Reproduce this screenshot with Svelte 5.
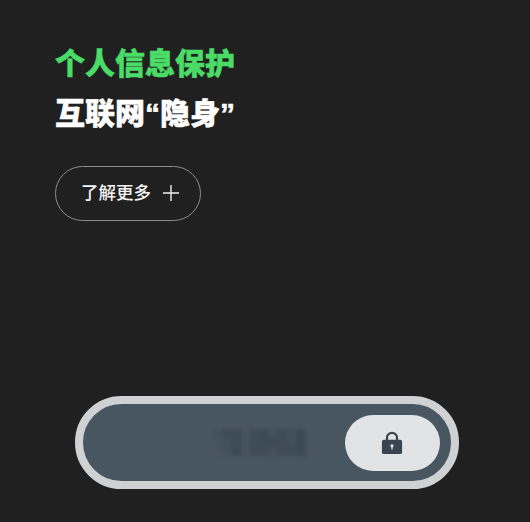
<script>
    // mosaic over the masked number, darkness per cell
    const cells = [
        .2, .45, .45, .15, .4, .55, .3, .5, .3, .55,
        .1, .3, .45, .15, .45, .5, .5, .45, .35, .55,
        .05, .2, .55, .15, .4, .45, .25, .5, .45, .6
    ];
</script>

<main class="page">
    <section class="intro">
        <h1 class="green">个人信息保护</h1>
        <h2>互联网“隐身”</h2>
        <button class="more">
            <span>了解更多</span>
            <svg width="18" height="18" viewBox="0 0 18 18" aria-hidden="true">
                <path d="M9 1v16M1 9h16" stroke="#efefef" stroke-width="1.4" fill="none" />
            </svg>
        </button>
    </section>

    <div class="toggle">
        <div class="mosaic" aria-hidden="true">
            {#each cells as c}
                <i style="opacity: {c}"></i>
            {/each}
        </div>
        <div class="knob">
            <svg width="22" height="24" viewBox="0 0 24 26" aria-hidden="true">
                <path d="M6.5 11V7.5a5.5 5.5 0 0 1 11 0V11" stroke="#384550" stroke-width="2.4" fill="none" />
                <rect x="1" y="9.500" width="22" height="15.500" rx="2" fill="#384550" />
                <circle cx="12" cy="16" r="1.700" fill="#e6e7e9" />
                <rect x="11.300" y="16" width="1.400" height="4" fill="#e6e7e9" />
            </svg>
        </div>
    </div>
</main>

<style>
:global(body) {
    margin: 0;
    background: #202020;
}
.page {
    height: 522px;
    box-sizing: border-box;
    padding: 44px 71px 33px 55px;
    display: flex;
    flex-direction: column;
    font-family: "Liberation Sans", "Noto Sans CJK SC", sans-serif;
    overflow: hidden;
}
.intro {
    flex: 1;
}
h1, h2 {
    margin: 0;
    font-size: 30px;
    line-height: 40px;
    font-weight: 900;
    -webkit-text-stroke: 0.5px currentColor;
}
.green {
    color: #4bdc68;
}
h2 {
    margin-top: 10px;
    color: #fff;
}
.more {
    margin-top: 32px;
    width: 146px;
    height: 55px;
    padding: 0 20px 4px 25px;
    box-sizing: border-box;
    display: flex;
    align-items: center;
    justify-content: space-between;
    background: transparent;
    border: 1px solid #8c8c8c;
    border-radius: 28px;
    color: #f4f4f4;
    font-family: inherit;
    font-size: 17.500px;
    font-weight: 500;
}
.more svg {
    margin-top: 3px;
}
.toggle {
    margin-left: 20px;
    width: 384px;
    height: 93px;
    box-sizing: border-box;
    border: 8px solid #cfd1d3;
    border-radius: 47px;
    background: #485661;
    display: flex;
    align-items: center;
    justify-content: flex-end;
    padding-right: 11px;
    gap: 40px;
}
.mosaic {
    width: 92px;
    height: 28px;
    display: grid;
    grid-template-columns: repeat(10, 1fr);
    grid-template-rows: repeat(3, 1fr);
    filter: blur(1.500px);
}
.mosaic i {
    background: #33414d;
}
.knob {
    width: 95px;
    height: 56px;
    padding-right: 2px;
    box-sizing: border-box;
    border-radius: 28px;
    background: #e2e3e5;
    display: flex;
    align-items: center;
    justify-content: center;
}
</style>
